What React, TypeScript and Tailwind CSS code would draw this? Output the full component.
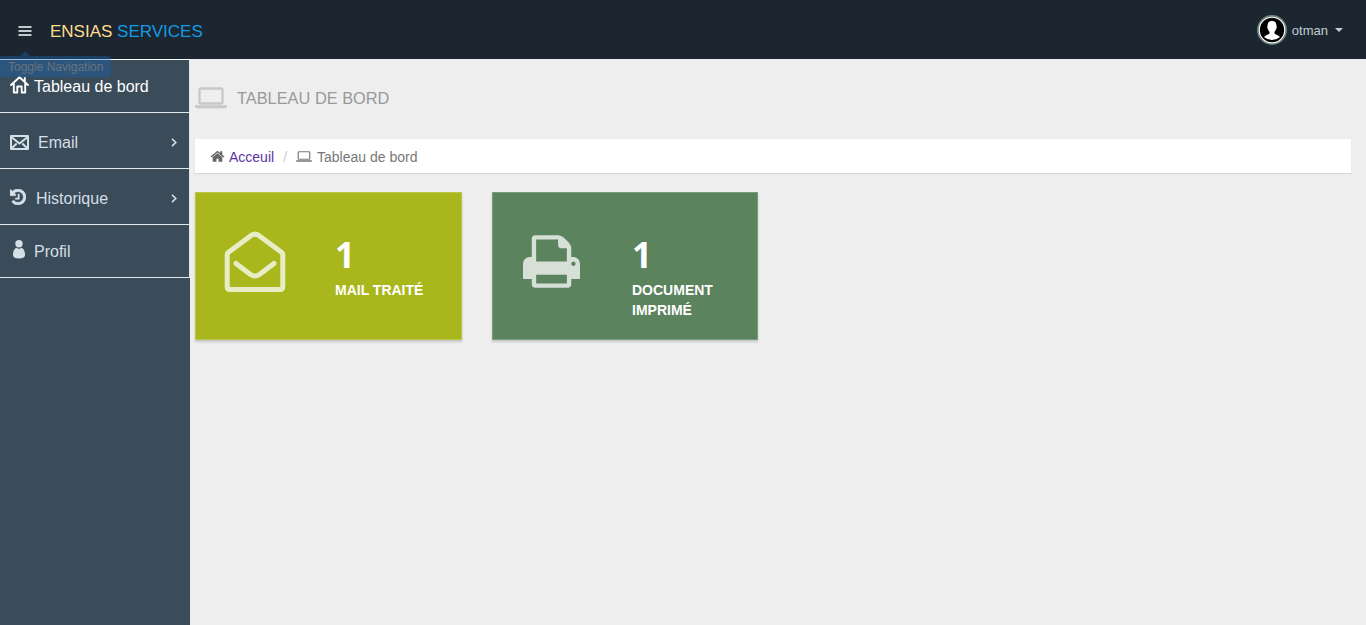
import React from "react";

type IconProps = { className?: string };

const Laptop = ({ className }: IconProps) => (
  <svg className={className} viewBox="0 0 32 22" fill="none" stroke="currentColor">
    <rect x="4.500" y="1.500" width="23" height="15" rx="1.500" strokeWidth="2.300" />
    <path d="M0 18.300h32v1q0 2-3 2H3q-3 0-3-2z" fill="currentColor" stroke="none" />
  </svg>
);

const SolidHome = ({ className }: IconProps) => (
  <svg className={className} viewBox="0 0 1792 1792" fill="currentColor">
    <path d="M1472 992v480q0 26-19 45t-45 19h-384v-384H768v384H384q-26 0-45-19t-19-45V992q0-1 .5-3t.5-3l575-474 575 474q1 2 1 6zm223-69l-62 74q-8 9-21 11h-3q-13 0-21-7L896 424 204 1001q-12 8-24 7-13-2-21-11l-62-74q-8-10-7-23.500t11-21.500l719-599q32-26 76-26t76 26l244 204V288q0-14 9-23t23-9h192q14 0 23 9t9 23v408l219 182q10 8 11 21.500t-7 23.500z" />
  </svg>
);

const History = ({ className }: IconProps) => (
  <svg className={className} viewBox="128 128 1536 1536" fill="currentColor" stroke="currentColor" strokeWidth="50">
    <path d="M1664 896q0 156-61 298t-164 245-245 164-298 61q-172 0-327-72.500t-264-204.500q-7-10-6.500-22.500t8.500-20.500l137-138q10-9 25-9 16 2 23 12 73 95 179 147t225 52q104 0 198.500-40.500t163.500-109.500 109.500-163.500 40.500-198.500-40.500-198.500-109.500-163.500-163.500-109.500-198.500-40.500q-98 0-188 35.500t-160 101.500l137 138q31 30 14 69-17 40-59 40h-448q-26 0-45-19t-19-45v-448q0-42 40-59 39-17 69 14l130 129q107-101 244.500-156.500t284.500-55.500 298 61 245 164 164 245 61 298zM1024 640v448q0 14-9 23t-23 9h-320q-14 0-23-9t-9-23v-64q0-14 9-23t23-9h224v-352q0-14 9-23t23-9h64q14 0 23 9t9 23z" />
  </svg>
);

const Printer = ({ className }: IconProps) => (
  <svg className={className} viewBox="0 128 1664 1536" fill="currentColor">
    <path d="M384 1536h896v-256h-896v256zM384 896h896v-384h-160q-40 0-68-28t-28-68v-160h-640v640zM1536 960q0-26-19-45t-45-19-45 19-19 45 19 45 45 19 45-19 19-45zM1664 960v416q0 13-9.500 22.500t-22.500 9.500h-224v160q0 40-28 68t-68 28h-960q-40 0-68-28t-28-68v-160h-224q-13 0-22.500-9.500t-9.500-22.500v-416q0-79 56.500-135.500t135.500-56.500h64v-544q0-40 28-68t68-28h672q40 0 88 20t76 48l152 152q28 28 48 76t20 88v256h64q79 0 135.500 56.500t56.500 135.500z" />
  </svg>
);

const OpenMail = ({ className }: IconProps) => (
  <svg className={className} viewBox="0 0 62 62" fill="none" stroke="currentColor" strokeWidth="5" strokeLinecap="round" strokeLinejoin="round">
    <path d="M3.200 23.500Q3.200 22.300 4.200 21.500L27.500 4.200Q31 2 34.500 4.200L57.800 21.500Q58.800 22.300 58.800 23.500V56Q58.800 58.500 56 58.500H6Q3.200 58.500 3.200 56Z" />
    <path d="M12 32.500L26.500 43.500Q31 46.500 35.500 43.500L50 32.500" />
  </svg>
);

const OutlineHome = ({ className }: IconProps) => (
  <svg className={className} viewBox="0 0 19 18" fill="none" stroke="currentColor" strokeWidth="1.900" strokeLinecap="round" strokeLinejoin="round">
    <path d="M1 9L9.500 1.300 18 9M3.800 8v8.500H7.300V10.500h4.400v6h3.500V8M14.800 2v3.500" />
  </svg>
);

const Envelope = ({ className }: IconProps) => (
  <svg className={className} viewBox="0 0 19 15" fill="none" stroke="currentColor" strokeWidth="2" strokeLinejoin="round">
    <path d="M1 1h17v13H1zM2 2.500l7.500 6 7.500-6M2 13l4.700-4.500M17 13l-4.700-4.500" />
  </svg>
);

const Person = ({ className }: IconProps) => (
  <svg className={className} viewBox="0 0 12 19" fill="currentColor">
    <circle cx="6" cy="3.800" r="3.700" />
    <path d="M3.200 7.800Q6 9.500 8.800 7.800C11 9.300 12.200 12 12 15.500Q11.500 18.500 6 18.500T0 15.500C-.2 12 1 9.300 3.200 7.800Z" />
  </svg>
);

const Chevron = () => (
  <svg className="h-[9px] w-[6px]" viewBox="0 0 6 9" fill="none" stroke="currentColor" strokeWidth="1.600">
    <path d="M1 .9L4.800 4.500 1 8.100" />
  </svg>
);

function Header() {
  return (
    <header className="flex h-[59px] shrink-0 items-center bg-[#1b2631]">
      <button className="relative ml-[18px] h-[11px] w-[14px]" aria-label="Menu">
        <svg className="mt-[2px] h-[10px] w-[14px]" viewBox="0 0 14 10"><path d="M.5 1h13M.5 5h13M.5 9h13" stroke="#ffffff" strokeWidth="1.600" /></svg>
        <span className="pointer-events-none absolute top-[27px] left-[-18px] z-10 h-[26px] w-[111px] opacity-40">
          <svg className="absolute top-0 left-5 h-[5px] w-[10px]" viewBox="0 0 10 5"><path d="M0 5L5 0l5 5z" fill="#1765b1" /></svg>
          <span className="absolute top-[5px] left-0 h-[21px] w-[111px] rounded-r bg-[#1765b1] pl-2 text-left text-xs leading-[22px] whitespace-nowrap text-[#b0b0b0]">
            Toggle Navigation
          </span>
        </span>
      </button>
      <h1 className="ml-[18px] pt-[4px] text-[17px] leading-[26px] text-[#ffdc8c]">
        ENSIAS <span className="text-[#159ae0]">SERVICES</span>
      </h1>
      <div className="mr-[23px] ml-auto flex items-center pt-px text-[13px] text-[#c4cdd5]">
        <svg className="mr-[5px] size-[30px]" viewBox="0 0 30 30">
          <circle cx="15" cy="15" r="15" fill="#71837f" />
          <circle cx="15" cy="15" r="13.300" fill="#fff" />
          <circle cx="15" cy="15" r="12.200" fill="#000" />
          <path fill="#fff" d="M15 6c3.400 0 4.700 2.300 4.500 5.500.5.400.3 2.100-.5 2.600-.3 1.400-.9 2.200-1.500 2.700v1.600c.8 1.300 4.400 1.800 5.500 3.500A12 12 0 0 1 7 21.900c1.100-1.700 4.700-2.200 5.500-3.500v-1.600c-.6-.5-1.200-1.300-1.500-2.700-.8-.5-1-2.200-.5-2.600-.2-3.200 1.100-5.500 4.500-5.500z" />
        </svg>
        <span className="pt-[2px]">otman</span>
        <svg className="ml-[7px] h-[4px] w-[8px]" viewBox="0 0 8 4"><path d="M0 0h8L4 4z" fill="currentColor" /></svg>
      </div>
    </header>
  );
}

function Sidebar() {
  const row = "flex items-center border-r border-b border-[#dfe6ea] pl-[10px]";
  return (
    <nav className="w-[190px] shrink-0 border-t border-white bg-[#3a4b5a] text-base text-[#d5dfe6]">
      <a className={row + " h-[53px] text-white"}>
        <OutlineHome className="mr-[5px] mb-[2px] h-[18px] w-[19px]" />
        <span className="pt-px">Tableau de bord</span>
      </a>
      <a className={row + " h-[56px]"}>
        <Envelope className="mt-[3px] mr-[9px] h-[15px] w-[19px]" />
        <span className="pt-[5px]">Email</span>
        <span className="mr-[12px] ml-auto pt-[4px]"><Chevron /></span>
      </a>
      <a className={row + " h-[56px]"}>
        <History className="mt-px mr-[10px] h-[16px] w-[16px]" />
        <span className="pt-[5px]">Historique</span>
        <span className="mr-[12px] ml-auto pt-[4px]"><Chevron /></span>
      </a>
      <a className={row + " h-[53px]"}>
        <Person className="mr-[9px] ml-[3px] h-[19px] w-[12px] -translate-y-[2px]" />
        <span className="pt-[2px]">Profil</span>
      </a>
    </nav>
  );
}

type CardProps = { color: string; label: string; children: React.ReactNode };

function StatCard({ color, label, children }: CardProps) {
  return (
    <section className={"flex h-[148px] border border-white/20 text-white shadow-[0_2px_2px_rgba(0,0,0,0.16)] " + color}>
      <div className="w-[139px] shrink-0 text-white/75">{children}</div>
      <div className="pt-[42px] font-bold">
        <div className="font-['Open_Sans',sans-serif] text-[35px] leading-[40px]">1</div>
        <div className="mt-[5px] w-[100px] text-[14px] leading-[20px]">{label}</div>
      </div>
    </section>
  );
}

export default function App() {
  return (
    <div className="flex h-[625px] w-[1366px] flex-col overflow-hidden bg-[#eeeeee] font-['Liberation_Sans',Arial,sans-serif]">
      <Header />
      <div className="flex flex-1">
        <Sidebar />
        <main className="flex-1 pr-[15px] pl-[5px]">
          <h2 className="flex h-[80px] items-center text-[16.380px] text-[#999999]">
            <Laptop className="mr-[10px] mb-[2px] h-[22px] w-[32px] text-[#c8c8c8]" />
            <span className="pb-[2px]">TABLEAU DE BORD</span>
          </h2>
          <div className="flex h-[34px] items-center bg-white pl-[15px] text-sm text-[#777777] shadow-[0_1px_1px_rgba(0,0,0,0.09)]">
            <SolidHome className="mr-[4px] h-[15px] w-[15px] text-[#666666]" />
            <a className="pt-[2px] text-[#5a35a0]">Acceuil</a>
            <span className="mx-[9px] pt-[2px] text-[#cccccc]">/</span>
            <Laptop className="mr-[5px] h-[11px] w-[16px]" />
            <span className="pt-[2px]">Tableau de bord</span>
          </div>
          <div className="mt-[19px] flex gap-[30px]">
            <div className="w-[267px]">
              <StatCard color="bg-[#a9b71c]" label="MAIL TRAITÉ">
                <OpenMail className="mt-[38px] ml-[28px] h-[62px] w-[62px]" />
              </StatCard>
            </div>
            <div className="w-[266px]">
              <StatCard color="bg-[#5b835d]" label="DOCUMENT IMPRIMÉ">
                <Printer className="mt-[42px] ml-[30px] h-[53px] w-[57px]" />
              </StatCard>
            </div>
          </div>
        </main>
      </div>
    </div>
  );
}
